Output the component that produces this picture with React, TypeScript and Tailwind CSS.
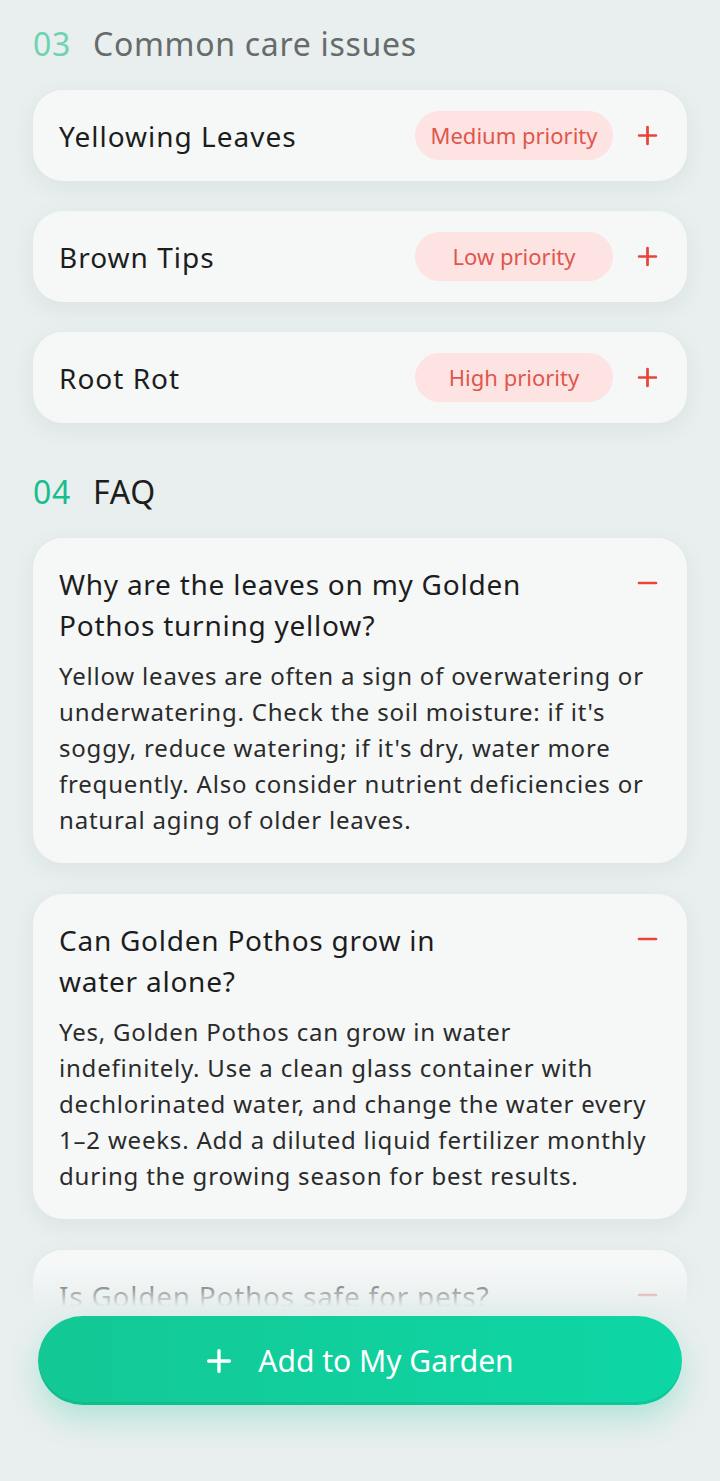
import React from 'react';

type Issue = { name: string; priority: string };

const issues: Issue[] = [
  { name: 'Yellowing Leaves', priority: 'Medium priority' },
  { name: 'Brown Tips', priority: 'Low priority' },
  { name: 'Root Rot', priority: 'High priority' },
];

// lines kept as in the design so the wrapping stays put
const faqs = [
  {
    q: ['Why are the leaves on my Golden', 'Pothos turning yellow?'],
    a: [
      'Yellow leaves are often a sign of overwatering or',
      "underwatering. Check the soil moisture: if it's",
      "soggy, reduce watering; if it's dry, water more",
      'frequently. Also consider nutrient deficiencies or',
      'natural aging of older leaves.',
    ],
  },
  {
    q: ['Can Golden Pothos grow in', 'water alone?'],
    a: [
      'Yes, Golden Pothos can grow in water',
      'indefinitely. Use a clean glass container with',
      'dechlorinated water, and change the water every',
      '1–2 weeks. Add a diluted liquid fertilizer monthly',
      'during the growing season for best results.',
    ],
  },
  {
    q: ['Is Golden Pothos safe for pets?'],
    a: [
      'No, Golden Pothos is toxic to cats and dogs if',
      'ingested. Keep it out of reach of pets.',
    ],
  },
];

const PlusIcon = ({ className }: { className?: string }) => (
  <svg viewBox="0 0 20 20" className={className} fill="none" stroke="currentColor" strokeWidth="2.6" strokeLinecap="round">
    <path d="M10 2v16M2 10h16" />
  </svg>
);

const MinusIcon = ({ className }: { className?: string }) => (
  <svg viewBox="0 0 20 4" className={className} fill="none" stroke="currentColor" strokeWidth="2.6" strokeLinecap="round">
    <path d="M1.5 2h17" />
  </svg>
);

const App: React.FC = () => {
  return (
    <div
      className="relative h-[1481px] w-[720px] overflow-hidden bg-[#e8efee]"
      style={{ fontFamily: '"Noto Sans", Roboto, sans-serif' }}
    >
      <div className="px-[33px] pt-[26px]">
        {/* 03 care issues */}
        <h2 className="flex items-center gap-[22px] text-[32px] leading-[36px] tracking-[0.7px]">
          <span className="text-[#6fd3b2]">03</span>
          <span className="text-[#666b6b]">Common care issues</span>
        </h2>

        <div className="mt-[28px] flex flex-col gap-[30px]">
          {issues.map((issue) => (
            <div
              key={issue.name}
              className="flex h-[91px] items-center rounded-[30px] bg-[#f6f8f8] pl-[26px] pr-[29px] shadow-[0_6px_20px_rgba(120,150,145,0.12)]"
            >
              <span className="flex-1 text-[28px] tracking-[1px] text-[#1d1d1d]">{issue.name}</span>
              <span className="flex h-[49px] w-[198px] items-center justify-center rounded-full bg-[#fde3e1] text-[22px] text-[#e0564c]">
                {issue.priority}
              </span>
              <PlusIcon className="ml-[24px] h-[21px] w-[21px] text-[#e8453a]" />
            </div>
          ))}
        </div>

        {/* 04 FAQ */}
        <h2 className="mt-[51px] flex items-center gap-[22px] text-[32px] leading-[36px] tracking-[0.7px]">
          <span className="text-[#19bd8e]">04</span>
          <span className="text-[#1d1d1d]">FAQ</span>
        </h2>

        <div className="mt-[28px] flex flex-col gap-[31px]">
          {faqs.map((f) => (
            <div
              key={f.q[0]}
              className="rounded-[30px] bg-[#f6f8f8] pb-[25px] pl-[26px] pr-[29px] pt-[26px] shadow-[0_6px_20px_rgba(120,150,145,0.12)]"
            >
              <div className="flex items-start">
                <p className="text-[28px] leading-[41px] tracking-[0.75px] text-[#1d1d1d]">
                  {f.q.map((line) => (
                    <span key={line} className="block whitespace-nowrap">{line}</span>
                  ))}
                </p>
                <div className="ml-auto pt-[17px]">
                  <MinusIcon className="h-[4px] w-[21px] text-[#e8453a]" />
                </div>
              </div>
              <p className="mt-[12px] text-[24px] leading-[36px] tracking-[0.8px] text-[#2b2b2b]">
                {f.a.map((line) => (
                  <span key={line} className="block whitespace-nowrap">{line}</span>
                ))}
              </p>
            </div>
          ))}
        </div>
      </div>

      {/* bottom fade + action button */}
      <div className="absolute inset-x-0 bottom-0 h-[218px] bg-gradient-to-b from-[#e8efee]/0 via-[#e8efee] via-[20%] to-[#e8efee]" />
      <div className="absolute inset-x-0 bottom-[76px] px-[38px]">
        <button className="flex h-[89px] w-full items-center justify-center gap-[26px] rounded-full bg-gradient-to-r from-[#13c895] to-[#0dd7a5] text-[30px] text-white shadow-[0_14px_30px_rgba(20,190,150,0.25),inset_0_-3px_0_rgba(0,120,90,0.15)]">
          <PlusIcon className="h-[26px] w-[26px]" />
          <span>Add to My Garden</span>
        </button>
      </div>
    </div>
  );
};

export default App;
